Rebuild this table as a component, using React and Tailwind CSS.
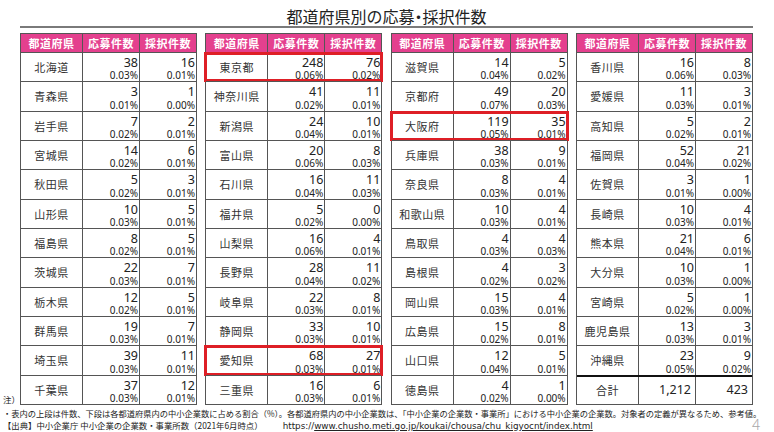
import React from "react";

const T1 = [
  ["北海道", "38", "0.03%", "16", "0.01%"],
  ["青森県", "3", "0.01%", "1", "0.00%"],
  ["岩手県", "7", "0.02%", "2", "0.01%"],
  ["宮城県", "14", "0.02%", "6", "0.01%"],
  ["秋田県", "5", "0.02%", "3", "0.01%"],
  ["山形県", "10", "0.03%", "5", "0.01%"],
  ["福島県", "8", "0.02%", "5", "0.01%"],
  ["茨城県", "22", "0.03%", "7", "0.01%"],
  ["栃木県", "12", "0.02%", "5", "0.01%"],
  ["群馬県", "19", "0.03%", "7", "0.01%"],
  ["埼玉県", "39", "0.03%", "11", "0.01%"],
  ["千葉県", "37", "0.03%", "12", "0.01%"],
];
const T2 = [
  ["東京都", "248", "0.06%", "76", "0.02%", true],
  ["神奈川県", "41", "0.02%", "11", "0.01%"],
  ["新潟県", "24", "0.04%", "10", "0.01%"],
  ["富山県", "20", "0.06%", "8", "0.03%"],
  ["石川県", "16", "0.04%", "11", "0.03%"],
  ["福井県", "5", "0.02%", "0", "0.00%"],
  ["山梨県", "16", "0.06%", "4", "0.01%"],
  ["長野県", "28", "0.04%", "11", "0.02%"],
  ["岐阜県", "22", "0.03%", "8", "0.01%"],
  ["静岡県", "33", "0.03%", "10", "0.01%"],
  ["愛知県", "68", "0.03%", "27", "0.01%", true],
  ["三重県", "16", "0.03%", "6", "0.01%"],
];
const T3 = [
  ["滋賀県", "14", "0.04%", "5", "0.02%"],
  ["京都府", "49", "0.07%", "20", "0.03%"],
  ["大阪府", "119", "0.05%", "35", "0.01%", true],
  ["兵庫県", "38", "0.03%", "9", "0.01%"],
  ["奈良県", "8", "0.03%", "4", "0.01%"],
  ["和歌山県", "10", "0.03%", "4", "0.01%"],
  ["鳥取県", "4", "0.03%", "4", "0.03%"],
  ["島根県", "4", "0.02%", "3", "0.02%"],
  ["岡山県", "15", "0.03%", "4", "0.01%"],
  ["広島県", "15", "0.02%", "8", "0.01%"],
  ["山口県", "12", "0.04%", "5", "0.01%"],
  ["徳島県", "4", "0.02%", "1", "0.00%"],
];
const T4 = [
  ["香川県", "16", "0.06%", "8", "0.03%"],
  ["愛媛県", "11", "0.03%", "3", "0.01%"],
  ["高知県", "5", "0.02%", "2", "0.01%"],
  ["福岡県", "52", "0.04%", "21", "0.02%"],
  ["佐賀県", "3", "0.01%", "1", "0.00%"],
  ["長崎県", "10", "0.03%", "4", "0.01%"],
  ["熊本県", "21", "0.04%", "6", "0.01%"],
  ["大分県", "10", "0.03%", "1", "0.00%"],
  ["宮崎県", "5", "0.02%", "1", "0.00%"],
  ["鹿児島県", "13", "0.03%", "3", "0.01%"],
  ["沖縄県", "23", "0.05%", "9", "0.02%"],
];

const NUM = "font-['Noto_Sans','Noto_Sans_CJK_JP',sans-serif]";

function NumCell({ n, p, last }) {
  return (
    <div
      className={`flex flex-col items-end justify-between pr-px pt-[4px] pb-px ${
        last ? "" : "border-r border-[#555]"
      } ${NUM} text-[#222]`}
    >
      <span className="text-[12.5px] leading-[11px]">{n}</span>
      <span className="text-[10px] leading-[9px]">{p}</span>
    </div>
  );
}

function Row({ r }) {
  const [name, n1, p1, n2, p2, hl] = r;
  return (
    <div className="relative grid grid-cols-[62px_57px_1fr] h-[29.33px] border-t border-[#555]">
      <div className="flex items-center justify-center border-r border-[#555] text-[11px] text-[#333] tracking-[0.5px]">
        {name}
      </div>
      <NumCell n={n1} p={p1} />
      <NumCell n={n2} p={p2} last />
      {hl && (
        <div className="absolute -left-[2px] -right-[2px] -top-[1px] -bottom-[1px] border-[3px] border-[#de1f26]" />
      )}
    </div>
  );
}

function Table({ rows, total }) {
  return (
    <div className="w-[177px] border border-[#555] flex flex-col">
      <div className="grid grid-cols-[62px_57px_1fr] h-[18px] bg-[#e4408e] text-white text-[11px] font-bold tracking-[0.5px]">
        <div className="flex items-center justify-center border-r border-[#555]">都道府県</div>
        <div className="flex items-center justify-center border-r border-[#555]">応募件数</div>
        <div className="flex items-center justify-center">採択件数</div>
      </div>
      {rows.map((r) => (
        <Row key={r[0]} r={r} />
      ))}
      {total && (
        <div className="grid grid-cols-[62px_57px_1fr] h-[29.33px] border-t-2 border-[#111]">
          <div className="flex items-center justify-center border-r border-[#555] text-[11px] text-[#333] tracking-[0.5px]">
            合計
          </div>
          <div className={`flex items-center justify-end pr-[4px] border-r border-[#555] text-[12.5px] text-[#222] ${NUM}`}>
            1,212
          </div>
          <div className={`flex items-center justify-end pr-[4px] text-[12.5px] text-[#222] ${NUM}`}>423</div>
        </div>
      )}
    </div>
  );
}

export default function App() {
  return (
    <div className="w-[774px] h-[432px] bg-white overflow-hidden text-[#222] font-['Noto_Sans_CJK_JP',sans-serif]">
      <div className="pl-[20px] pr-[21px] pt-[6px]">
        <div className="text-center text-[16px] leading-[20px] text-[#222] border-b-2 border-[#7a7a7a]">
          都道府県別の応募<span className="inline-block -mx-[4px]">・</span>採択件数
        </div>
      </div>
      <div className="flex mt-[5px]">
        <div className="w-[20px] flex items-end pl-[3px]">
          <span className="text-[8.5px] leading-[12px] whitespace-nowrap">注）</span>
        </div>
        <div className="w-[733px] flex justify-between items-start">
          <Table rows={T1} />
          <Table rows={T2} />
          <Table rows={T3} />
          <Table rows={T4} total />
        </div>
      </div>
      <div className="pl-[3px] pr-[14px] pt-[2px]">
        <div className="text-[8.25px] leading-[12px] whitespace-nowrap">
          ・表内の上段は件数、下段は各都道府県内の中小企業数に占める割合（%）。各都道府県内の中小企業数は、「中小企業の企業数・事業所」における中小企業の企業数。対象者の定義が異なるため、参考値。
        </div>
        <div className="flex justify-between items-start">
          <div className="text-[8.4px] leading-[12px] whitespace-nowrap">
            【出典】中小企業庁 中小企業の企業数・事業所数（2021年6月時点）
            <span className="inline-block w-[20px]" />
            <span className="font-['DejaVu_Sans',sans-serif] text-[8.8px]">
              https://<span className="underline">www.chusho.meti.go.jp/koukai/chousa/chu_kigyocnt/index.html</span>
            </span>
          </div>
          <div className={`text-[14px] leading-[12px] font-light text-[#a8a8a8] ${NUM}`}>4</div>
        </div>
      </div>
    </div>
  );
}
